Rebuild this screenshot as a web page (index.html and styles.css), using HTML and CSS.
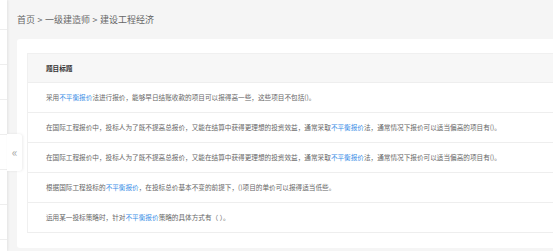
FILE: index.html
```html
<!DOCTYPE html>
<html lang="zh-CN">
<head>
    <meta charset="UTF-8">
    <meta name="viewport" content="width=device-width, initial-scale=1.0">
    <title>建设工程经济</title>
    <link rel="stylesheet" href="styles.css">
</head>
<body>

    <!-- Side menu (collapsed) -->
    <div class="sidebar">
        <div class="side-item first"></div>
        <div class="side-item"></div>
        <div class="side-item"></div>
        <div class="side-item"></div>
        <div class="side-item"></div>
        <div class="side-item"></div>
        <div class="side-item"></div>
    </div>
    <div class="toggle">&laquo;</div>

    <div class="main">
        <div class="breadcrumb">首页<span class="sep">&gt;</span>一级建造师<span class="sep">&gt;</span>建设工程经济</div>

        <div class="card">
            <div class="table">
                <div class="row head">题目标题</div>
                <div class="row">采用<span class="hl">不平衡报价</span>法进行报价，能够早日结账收款的项目可以报得高一些，这些项目不包括()。</div>
                <div class="row">在国际工程报价中，投标人为了既不提高总报价，又能在结算中获得更理想的投资效益，通常采取<span class="hl">不平衡报价</span>法，通常情况下报价可以适当偏高的项目有()。</div>
                <div class="row">在国际工程报价中，投标人为了既不提高总报价，又能在结算中获得更理想的投资效益，通常采取<span class="hl">不平衡报价</span>法，通常情况下报价可以适当偏高的项目有()。</div>
                <div class="row">根据国际工程投标的<span class="hl">不平衡报价</span>，在投标总价基本不变的前提下，()项目的单价可以报得适当低些。</div>
                <div class="row">运用某一投标策略时，针对<span class="hl">不平衡报价</span>策略的具体方式有（  ）。</div>
            </div>
        </div>
    </div>

</body>
</html>
```

FILE: styles.css
```css
body {
    margin: 0;
    height: 251px;
    overflow: hidden;
    display: flex;
    font-family: "Noto Sans CJK SC", "Microsoft YaHei", sans-serif;
    background: #f5f5f5;
    position: relative;
}

.sidebar {
    width: 7px;
    flex-shrink: 0;
    background: #fff;
    box-shadow: 1px 0 3px rgba(0, 0, 0, 0.08);
    position: relative;
    z-index: 1;
}

.side-item {
    height: 34px;
    border-bottom: 1px solid #eee;
}

.side-item.first {
    height: 29px;
}

.toggle {
    position: absolute;
    left: 7px;
    top: 134px;
    width: 15px;
    height: 37px;
    background: #fff;
    border-radius: 0 3px 3px 0;
    box-shadow: 1px 0 3px rgba(0, 0, 0, 0.08);
    color: #aaa;
    font-size: 12px;
    line-height: 35px;
    text-align: center;
    z-index: 2;
}

.main {
    flex: 1;
    min-width: 0;
    padding-left: 10px;
}

.breadcrumb {
    height: 39px;
    line-height: 40px;
    font-size: 9px;
    color: #666;
}

.sep {
    margin: 0 2.5px;
}

.card {
    background: #fff;
    border-radius: 3px 0 0 3px;
    padding: 14px 0 15px 10px;
}

.table {
    border: 1px solid #f0f0f0;
    border-right: none;
    border-bottom-color: #eee;
}

.row {
    height: 29px;
    line-height: 29px;
    padding-left: 18px;
    font-size: 6.64px;
    color: #666;
    border-top: 1px solid #eee;
    white-space: nowrap;
    overflow: hidden;
}

.row.head {
    height: 28px;
    border-top: none;
    background: #f7f7f7;
    color: #333;
    font-weight: bold;
}

.hl {
    color: #3a8ee6;
}
```
